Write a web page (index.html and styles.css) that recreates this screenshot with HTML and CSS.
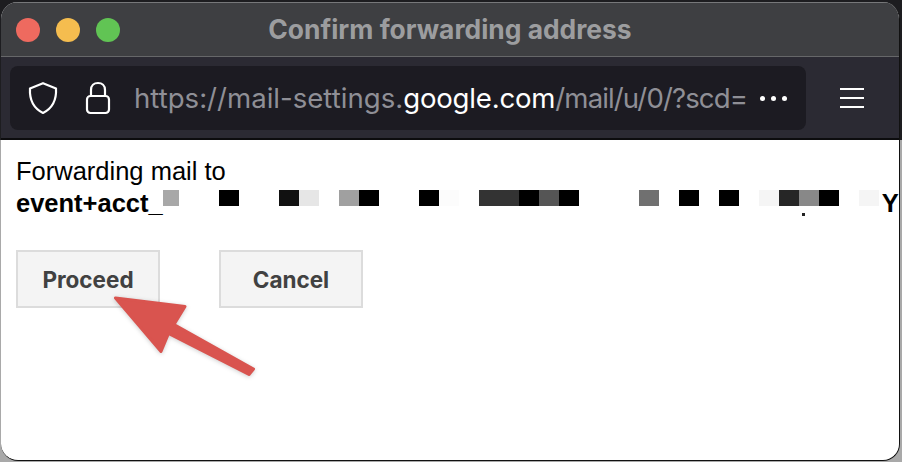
FILE: index.html
```html
<!DOCTYPE html>
<html lang="en">
<head>
    <meta charset="UTF-8">
    <meta name="viewport" content="width=device-width, initial-scale=1.0">
    <title>Confirm forwarding address</title>
    <link rel="stylesheet" href="styles.css">
</head>
<body>
    <div class="window">
        <header class="titlebar">
            <div class="traffic-lights">
                <span class="light light-close"></span>
                <span class="light light-min"></span>
                <span class="light light-max"></span>
            </div>
            <div class="window-title">Confirm forwarding address</div>
        </header>

        <div class="toolbar">
            <div class="urlbar">
                <svg class="icon-shield" width="32" height="34" viewBox="0 0 32 34" fill="none" stroke="#fff" stroke-width="2.2" stroke-linejoin="round">
                    <path d="M16 2.200 L29 7.400 C29.600 18 26 27 16 32 C6 27 2.400 18 3 7.400 Z"/>
                </svg>
                <svg class="icon-lock" width="26" height="34" viewBox="0 0 26 34" fill="none" stroke="#fff" stroke-width="2.2">
                    <rect x="2" y="15" width="22" height="17" rx="3.500"/>
                    <path d="M6 15 V9 C6 4.500 9 2 13 2 C17 2 20 4.500 20 9 V15"/>
                </svg>
                <div class="url"><span>https://mail-settings.</span><span class="url-domain">google.com</span><span class="url-path">/mail/u/0/?scd=</span></div>
                <div class="url-more">
                    <span class="dot"></span>
                    <span class="dot"></span>
                    <span class="dot"></span>
                </div>
            </div>
            <div class="menu-button">
                <span class="menu-line"></span>
                <span class="menu-line"></span>
                <span class="menu-line"></span>
            </div>
        </div>

        <main class="content">
            <div class="message">Forwarding mail to</div>
            <div class="address">
                <strong>event+acct_</strong>
                <div class="masked">
                    <span class="px px-first tone-a"></span>
                    <span class="px px-gap2"></span>
                    <span class="px tone-k"></span>
                    <span class="px px-gap2"></span>
                    <span class="px tone-b"></span>
                    <span class="px tone-c"></span>
                    <span class="px"></span>
                    <span class="px tone-d"></span>
                    <span class="px tone-k"></span>
                    <span class="px px-gap2"></span>
                    <span class="px tone-k"></span>
                    <span class="px tone-e"></span>
                    <span class="px"></span>
                    <span class="px tone-f"></span>
                    <span class="px tone-f"></span>
                    <span class="px tone-k"></span>
                    <span class="px tone-g"></span>
                    <span class="px tone-k"></span>
                    <span class="px px-gap3"></span>
                    <span class="px tone-h"></span>
                    <span class="px"></span>
                    <span class="px tone-k"></span>
                    <span class="px"></span>
                    <span class="px tone-k"></span>
                    <span class="px"></span>
                    <span class="px tone-i"></span>
                    <span class="px tone-j"></span>
                    <span class="px tone-l"></span>
                    <span class="px tone-k"></span>
                    <span class="px"></span>
                    <span class="px tone-i"></span>
                </div>
                <strong class="address-end">Y</strong>
            </div>
            <div class="actions">
                <button class="btn" type="button">Proceed</button>
                <button class="btn" type="button">Cancel</button>
            </div>
        </main>
    </div>

    <span class="stray-dot"></span>

    <svg class="arrow" width="902" height="462" viewBox="0 0 902 462">
        <path class="arrow-shape" d="M115.500 298 L185 306.500 L174 324.500 L253.500 369 L249 374.500 L168.500 333.500 L161 351.500 Z"/>
    </svg>
</body>
</html>
```

FILE: styles.css
```css
* {
    box-sizing: border-box;
}

html,
body {
    margin: 0;
    height: 100%;
}

body {
    position: relative;
    overflow: hidden;
    background: linear-gradient(#1d1d20 0, #1d1d20 140px, #a9a9a9 140px);
    padding: 2px 1px 0 1px;
}

.window {
    height: 459px;
    width: 899px;
    border-radius: 17px;
    overflow: hidden;
    background: #fff;
    border-right: 1px solid #111;
    border-bottom: 1px solid #111;
}

/* title bar */
.titlebar {
    position: relative;
    height: 55px;
    background: #3e3f42;
    border-top: 1px solid #77787a;
    border-bottom: 1px solid #666769;
    padding-bottom: 2px;
    display: flex;
    align-items: center;
    justify-content: center;
}

.traffic-lights {
    position: absolute;
    left: 15px;
    top: 15px;
    display: flex;
    gap: 16px;
}

.light {
    width: 24px;
    height: 24px;
    border-radius: 50%;
}

.light-close {
    background: #ee6a5f;
}

.light-min {
    background: #f5bd4f;
}

.light-max {
    background: #61c454;
}

.window-title {
    font-family: Inter, 'Liberation Sans', sans-serif;
    font-weight: 700;
    font-size: 26.400px;
    color: #9c9d9f;
    white-space: nowrap;
}

/* toolbar */
.toolbar {
    height: 83px;
    background: #2b2a33;
    border-bottom: 2px solid #0c0c0e;
    padding: 9px 0 0 9px;
    display: flex;
    align-items: flex-start;
}

.urlbar {
    width: 796px;
    height: 64px;
    background: #1c1b22;
    border-radius: 8px;
    display: flex;
    align-items: center;
    padding-left: 17px;
}

.icon-lock {
    margin-left: 26px;
}

.url {
    width: 612px;
    margin-left: 23px;
    overflow: hidden;
    white-space: nowrap;
    font-family: Inter, 'Liberation Sans', sans-serif;
    font-size: 27.600px;
    color: #8f8f96;
}

.url-domain {
    color: #fff;
    letter-spacing: -0.200px;
}

.url-path {
    letter-spacing: -0.900px;
}

.url-more {
    display: flex;
    gap: 6px;
    margin-left: 14px;
}

.dot {
    width: 5px;
    height: 5px;
    border-radius: 50%;
    background: #fff;
}

.menu-button {
    margin: 22px 0 0 34px;
    display: flex;
    flex-direction: column;
    gap: 7px;
}

.menu-line {
    width: 24px;
    height: 2px;
    background: #fff;
}

/* page content */
.content {
    padding: 15px 0 0 15px;
    font-family: 'Liberation Sans', Arial, sans-serif;
    font-size: 25.500px;
    line-height: 32px;
    color: #000;
}

.address {
    display: flex;
    align-items: flex-start;
    white-space: nowrap;
}

.masked {
    display: flex;
    height: 16px;
    margin-top: 3px;
}

.px {
    width: 20px;
    height: 16px;
}

.px-first {
    width: 16px;
}

.px-gap2 {
    width: 40px;
}

.px-gap3 {
    width: 60px;
}

.tone-a { background: #a8a8a8; }
.tone-b { background: #111; }
.tone-c { background: #e6e6e6; }
.tone-d { background: #a0a0a0; }
.tone-e { background: #fcfcfc; }
.tone-f { background: #333; }
.tone-g { background: #555; }
.tone-h { background: #707070; }
.tone-i { background: #f5f5f5; }
.tone-j { background: #262626; }
.tone-k { background: #000; }
.tone-l { background: #888; }

.address-end {
    margin-left: 3px;
}

.actions {
    display: flex;
    gap: 59px;
    margin-top: 31px;
}

.btn {
    width: 144px;
    height: 58px;
    background: #f4f4f4;
    border: 2px solid #dcdcdc;
    border-radius: 0;
    font-family: Inter, 'Liberation Sans', sans-serif;
    font-weight: 700;
    font-size: 22.500px;
    color: #414141;
    padding: 0;
}

/* leftovers and annotation on top of the page */
.stray-dot {
    position: absolute;
    left: 802px;
    top: 213px;
    width: 3px;
    height: 3px;
    background: #222;
}

.arrow {
    position: absolute;
    left: 0;
    top: 0;
    pointer-events: none;
}

.arrow-shape {
    fill: #d9544f;
    stroke: #d9544f;
    stroke-width: 3;
    stroke-linejoin: round;
    filter: drop-shadow(0 1px 2px rgba(0, 0, 0, 0.2));
}
```
